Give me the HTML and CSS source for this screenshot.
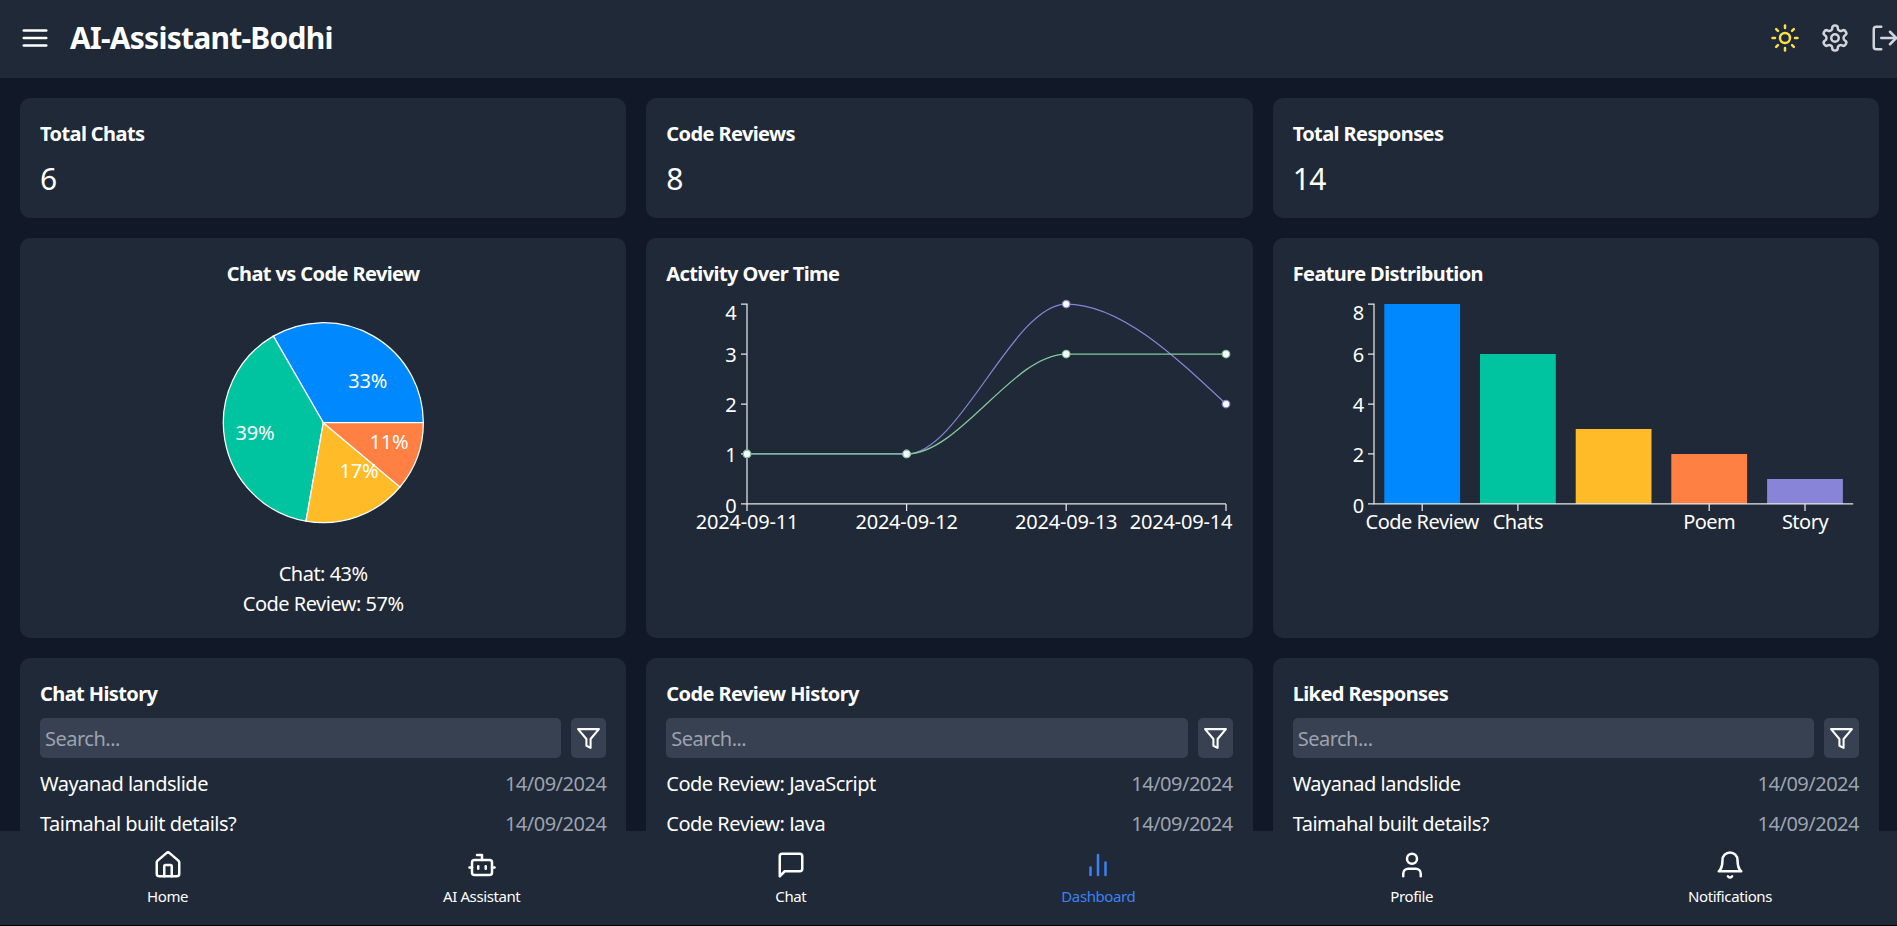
FILE: index.html
```html
<!DOCTYPE html>
<html lang="en">
<head>
    <meta charset="UTF-8">
    <meta name="viewport" content="width=device-width, initial-scale=1.0">
    <title>AI-Assistant-Bodhi</title>
    <link rel="stylesheet" href="styles.css">
</head>
<body>

<div class="app">
    <header class="topbar">
        <svg class="icon" viewBox="0 0 24 24"><line x1="3" y1="6" x2="21" y2="6"/><line x1="3" y1="12" x2="21" y2="12"/><line x1="3" y1="18" x2="21" y2="18"/></svg>
        <h1>AI-Assistant-Bodhi</h1>
        <div class="topbar-actions">
            <svg class="icon sun" viewBox="0 0 24 24"><circle cx="12" cy="12" r="4"/><path d="M12 2v2"/><path d="M12 20v2"/><path d="m4.93 4.93 1.41 1.41"/><path d="m17.66 17.66 1.41 1.41"/><path d="M2 12h2"/><path d="M20 12h2"/><path d="m6.34 17.66-1.41 1.41"/><path d="m19.07 4.93-1.41 1.41"/></svg>
            <svg class="icon muted" viewBox="0 0 24 24"><path d="M12.22 2h-.44a2 2 0 0 0-2 2v.18a2 2 0 0 1-1 1.73l-.43.25a2 2 0 0 1-2 0l-.15-.08a2 2 0 0 0-2.73.73l-.22.38a2 2 0 0 0 .73 2.73l.15.1a2 2 0 0 1 1 1.72v.51a2 2 0 0 1-1 1.74l-.15.09a2 2 0 0 0-.73 2.73l.22.38a2 2 0 0 0 2.73.73l.15-.08a2 2 0 0 1 2 0l.43.25a2 2 0 0 1 1 1.73V20a2 2 0 0 0 2 2h.44a2 2 0 0 0 2-2v-.18a2 2 0 0 1 1-1.73l.43-.25a2 2 0 0 1 2 0l.15.08a2 2 0 0 0 2.73-.73l.22-.39a2 2 0 0 0-.73-2.73l-.15-.08a2 2 0 0 1-1-1.74v-.5a2 2 0 0 1 1-1.74l.15-.09a2 2 0 0 0 .73-2.73l-.22-.38a2 2 0 0 0-2.73-.73l-.15.08a2 2 0 0 1-2 0l-.43-.25a2 2 0 0 1-1-1.73V4a2 2 0 0 0-2-2z"/><circle cx="12" cy="12" r="3"/></svg>
            <svg class="icon muted" viewBox="0 0 24 24"><path d="M9 21H5a2 2 0 0 1-2-2V5a2 2 0 0 1 2-2h4"/><polyline points="16 17 21 12 16 7"/><line x1="21" y1="12" x2="9" y2="12"/></svg>
        </div>
    </header>

    <main class="dashboard">
        <section class="card">
            <h2>Total Chats</h2>
            <p class="stat">6</p>
        </section>
        <section class="card">
            <h2>Code Reviews</h2>
            <p class="stat">8</p>
        </section>
        <section class="card">
            <h2>Total Responses</h2>
            <p class="stat">14</p>
        </section>

        <section class="card">
            <h2 class="centered">Chat vs Code Review</h2>
            <svg class="chart" viewBox="0 0 566.33 250">
                <g class="slices">
                    <path fill="#0088fe" d="M283.33 124.7 L383.33 124.7 A100 100 0 0 0 233.33 38.1 Z"/>
                    <path fill="#00c49f" d="M283.33 124.7 L233.33 38.1 A100 100 0 0 0 265.97 223.18 Z"/>
                    <path fill="#ffbb28" d="M283.33 124.7 L265.97 223.18 A100 100 0 0 0 359.93 188.98 Z"/>
                    <path fill="#ff8042" d="M283.33 124.7 L359.93 188.98 A100 100 0 0 0 383.33 124.7 Z"/>
                </g>
                <g class="slice-labels">
                    <text x="327.7" y="90">33%</text>
                    <text x="215" y="142">39%</text>
                    <text x="319" y="180">17%</text>
                    <text x="349" y="151">11%</text>
                </g>
            </svg>
            <div class="pie-legend">
                <p>Chat: 43%</p>
                <p>Code Review: 57%</p>
            </div>
        </section>

        <section class="card">
            <h2>Activity Over Time</h2>
            <svg class="chart" viewBox="0 0 566.33 250">
                <g class="axis">
                    <path d="M75 6H81V206H560"/>
                    <path d="M75 56H81M75 106H81M75 156H81M75 206H81"/>
                    <path d="M81 206V213M240.6 206V213M400.2 206V213M560 206V213"/>
                </g>
                <g class="tick-labels end">
                    <text x="70.5" y="22">4</text>
                    <text x="70.5" y="64">3</text>
                    <text x="70.5" y="114">2</text>
                    <text x="70.5" y="164">1</text>
                    <text x="70.5" y="215">0</text>
                </g>
                <g class="tick-labels">
                    <text x="81" y="231">2024-09-11</text>
                    <text x="240.6" y="231">2024-09-12</text>
                    <text x="400.2" y="231">2024-09-13</text>
                    <text x="515" y="231">2024-09-14</text>
                </g>
                <path class="line purple" d="M81 156H240.6C293.8 156 347 6 400.2 6C453.4 6 506.7 56 560 106"/>
                <path class="line green" d="M81 156H240.6C293.8 156 347 56 400.2 56H560"/>
                <g class="dots purple">
                    <circle cx="81" cy="156" r="3.75"/>
                    <circle cx="240.6" cy="156" r="3.75"/>
                    <circle cx="400.2" cy="6" r="3.75"/>
                    <circle cx="560" cy="106" r="3.75"/>
                </g>
                <g class="dots green">
                    <circle cx="81" cy="156" r="3.75"/>
                    <circle cx="240.6" cy="156" r="3.75"/>
                    <circle cx="400.2" cy="56" r="3.75"/>
                    <circle cx="560" cy="56" r="3.75"/>
                </g>
            </svg>
        </section>

        <section class="card">
            <h2>Feature Distribution</h2>
            <svg class="chart" viewBox="0 0 566.33 250">
                <rect fill="#0088fe" x="91.3" y="6" width="75.8" height="200"/>
                <rect fill="#00c49f" x="187" y="56" width="75.8" height="150"/>
                <rect fill="#ffbb28" x="282.7" y="131" width="75.8" height="75"/>
                <rect fill="#ff8042" x="378.3" y="156" width="75.8" height="50"/>
                <rect fill="#8884d8" x="474.1" y="181" width="75.8" height="25"/>
                <g class="axis">
                    <path d="M75 6H81V206H560.2"/>
                    <path d="M75 56H81M75 106H81M75 156H81M75 206H81"/>
                    <path d="M129.2 206V213M224.9 206V213M416.2 206V213M512 206V213"/>
                </g>
                <g class="tick-labels end">
                    <text x="71" y="22">8</text>
                    <text x="71" y="64">6</text>
                    <text x="71" y="114">4</text>
                    <text x="71" y="164">2</text>
                    <text x="71" y="215">0</text>
                </g>
                <g class="tick-labels category">
                    <text x="129.2" y="231">Code Review</text>
                    <text x="224.9" y="231">Chats</text>
                    <text x="416.2" y="231">Poem</text>
                    <text x="512" y="231">Story</text>
                </g>
            </svg>
        </section>

        <section class="card">
            <h2>Chat History</h2>
            <div class="search-row">
                <input class="search" type="text" placeholder="Search...">
                <button class="filter-btn"><svg class="icon small" viewBox="0 0 24 24"><polygon points="22 3 2 3 10 12.46 10 19 14 21 14 12.46 22 3"/></svg></button>
            </div>
            <ul class="history">
                <li><span>Wayanad landslide</span><span class="date">14/09/2024</span></li>
                <li><span>Taimahal built details?</span><span class="date">14/09/2024</span></li>
            </ul>
        </section>
        <section class="card">
            <h2>Code Review History</h2>
            <div class="search-row">
                <input class="search" type="text" placeholder="Search...">
                <button class="filter-btn"><svg class="icon small" viewBox="0 0 24 24"><polygon points="22 3 2 3 10 12.46 10 19 14 21 14 12.46 22 3"/></svg></button>
            </div>
            <ul class="history">
                <li><span>Code Review: JavaScript</span><span class="date">14/09/2024</span></li>
                <li><span>Code Review: Java</span><span class="date">14/09/2024</span></li>
            </ul>
        </section>
        <section class="card">
            <h2>Liked Responses</h2>
            <div class="search-row">
                <input class="search" type="text" placeholder="Search...">
                <button class="filter-btn"><svg class="icon small" viewBox="0 0 24 24"><polygon points="22 3 2 3 10 12.46 10 19 14 21 14 12.46 22 3"/></svg></button>
            </div>
            <ul class="history">
                <li><span>Wayanad landslide</span><span class="date">14/09/2024</span></li>
                <li><span>Taimahal built details?</span><span class="date">14/09/2024</span></li>
            </ul>
        </section>
    </main>

    <nav class="bottom-nav">
        <a class="nav-item">
            <svg class="icon" viewBox="0 0 24 24"><path d="M15 21v-8a1 1 0 0 0-1-1h-4a1 1 0 0 0-1 1v8"/><path d="M3 10a2 2 0 0 1 .709-1.528l7-5.999a2 2 0 0 1 2.582 0l7 5.999A2 2 0 0 1 21 10v9a2 2 0 0 1-2 2H5a2 2 0 0 1-2-2z"/></svg>
            <span>Home</span>
        </a>
        <a class="nav-item">
            <svg class="icon" viewBox="0 0 24 24"><path d="M12 8V4H8"/><rect x="4" y="8" width="16" height="12" rx="2"/><path d="M2 14h2"/><path d="M20 14h2"/><path d="M15 13v2"/><path d="M9 13v2"/></svg>
            <span>AI Assistant</span>
        </a>
        <a class="nav-item">
            <svg class="icon" viewBox="0 0 24 24"><path d="M21 15a2 2 0 0 1-2 2H7l-4 4V5a2 2 0 0 1 2-2h14a2 2 0 0 1 2 2z"/></svg>
            <span>Chat</span>
        </a>
        <a class="nav-item active">
            <svg class="icon" viewBox="0 0 24 24"><line x1="18" y1="20" x2="18" y2="10"/><line x1="12" y1="20" x2="12" y2="4"/><line x1="6" y1="20" x2="6" y2="14"/></svg>
            <span>Dashboard</span>
        </a>
        <a class="nav-item">
            <svg class="icon" viewBox="0 0 24 24"><path d="M19 21v-2a4 4 0 0 0-4-4H9a4 4 0 0 0-4 4v2"/><circle cx="12" cy="7" r="4"/></svg>
            <span>Profile</span>
        </a>
        <a class="nav-item">
            <svg class="icon" viewBox="0 0 24 24"><path d="M6 8a6 6 0 0 1 12 0c0 7 3 9 3 9H3s3-2 3-9"/><path d="M10.3 21a1.94 1.94 0 0 0 3.4 0"/></svg>
            <span>Notifications</span>
        </a>
    </nav>
</div>

</body>
</html>
```

FILE: styles.css
```css
html, body {
    margin: 0;
    height: 100%;
    overflow: hidden;
    background-color: #000;
}

body {
    font-family: "Noto Sans", "Open Sans", sans-serif;
    font-size: 20px;
    line-height: 30px;
    letter-spacing: -0.5px;
    color: #fff;
}

h1, h2, p, ul {
    margin: 0;
    padding: 0;
}

.app {
    width: 1899px;
    height: 925px;
    display: flex;
    flex-direction: column;
    background-color: #111827;
}

.icon {
    width: 30px;
    height: 30px;
    flex: none;
    fill: none;
    stroke: currentColor;
    stroke-width: 2;
    stroke-linecap: round;
    stroke-linejoin: round;
}

.icon.small {
    width: 25px;
    height: 25px;
    display: block;
}

/* Top bar */
.topbar {
    height: 78px;
    box-sizing: border-box;
    flex: none;
    padding: 0 0 2px 20px;
    display: flex;
    align-items: center;
    gap: 20px;
    background-color: #1f2937;
}

.topbar h1 {
    font-size: 30px;
    line-height: 40px;
    font-weight: 700;
    letter-spacing: -0.75px;
}

.topbar-actions {
    margin-left: auto;
    margin-right: -1px;
    display: flex;
    gap: 20px;
}

.sun {
    color: #fde047;
}

.muted {
    color: #d1d5db;
}

/* Cards */
.dashboard {
    flex: 1;
    min-height: 0;
    overflow: hidden;
    padding: 20px;
    display: grid;
    grid-template-columns: repeat(3, 1fr);
    grid-auto-rows: min-content;
    gap: 20px;
}

.card {
    background-color: #1f2937;
    border-radius: 10px;
    padding: 20px;
}

.card h2 {
    font-size: 20px;
    line-height: 30px;
    font-weight: 700;
    letter-spacing: -0.6px;
    padding-top: 1px;
    margin-bottom: 9px;
}

.card h2.centered {
    text-align: center;
}

.stat {
    font-size: 30px;
    line-height: 38px;
    padding-top: 2px;
}

/* Charts */
.chart {
    display: block;
    width: 100%;
    height: 250px;
    overflow: visible;
}

.slices path {
    stroke: #fff;
    stroke-width: 1.25;
}

.slice-labels text {
    fill: #fff;
    font-size: 20px;
    letter-spacing: -0.2px;
    text-anchor: middle;
}

.pie-legend {
    margin: 11px 0 -1px;
    text-align: center;
}

.axis path {
    fill: none;
    stroke: #e5e7eb;
    stroke-width: 1.25;
}

.tick-labels text {
    fill: #fff;
    font-size: 20px;
    letter-spacing: -0.2px;
    text-anchor: middle;
}

.tick-labels.category text {
    letter-spacing: -0.5px;
}

.tick-labels.end text {
    text-anchor: end;
}

.line {
    fill: none;
    stroke-width: 1.25;
}

.line.purple, .dots.purple {
    stroke: #8884d8;
}

.line.green, .dots.green {
    stroke: #82ca9d;
}

.dots circle {
    fill: #fff;
    stroke-width: 1.25;
}

/* History lists */
.search-row {
    display: flex;
    gap: 10px;
    margin-bottom: 11px;
}

.search {
    flex: 1;
    min-width: 0;
    height: 40px;
    box-sizing: border-box;
    border: none;
    border-radius: 5px;
    padding: 0 5px;
    background-color: #374151;
    color: #fff;
    font-family: inherit;
    font-size: 20px;
    letter-spacing: inherit;
}

.search::placeholder {
    color: #9ca3af;
}

.filter-btn {
    width: 35px;
    height: 40px;
    padding: 0 5px;
    border: none;
    border-radius: 5px;
    background-color: #374151;
    color: #fff;
}

.history {
    list-style: none;
    display: flex;
    flex-direction: column;
    gap: 10px;
}

.history li {
    display: flex;
    justify-content: space-between;
}

.date {
    color: #9ca3af;
}

/* Bottom nav */
.bottom-nav {
    flex: none;
    height: 94px;
    box-sizing: border-box;
    padding: 19px 127px 0 147px;
    display: flex;
    justify-content: space-between;
    background-color: #1f2937;
}

.nav-item {
    display: flex;
    flex-direction: column;
    align-items: center;
    gap: 6px;
    font-size: 15px;
    line-height: 20px;
    letter-spacing: -0.4px;
    color: #fff;
}

.nav-item.active {
    color: #3b82f6;
}
```
